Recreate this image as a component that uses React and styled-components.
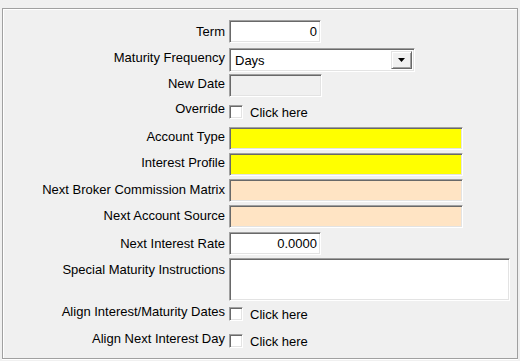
import React from "react";
import styled, { createGlobalStyle } from "styled-components";

const Global = createGlobalStyle`
  html, body { margin: 0; padding: 0; background: #f0f0f0; }
  body { font-family: "Liberation Sans", Arial, sans-serif; font-size: 13px; color: #000; }
  * { box-sizing: border-box; }
`;

const Page = styled.div`
  width: 520px;
  height: 361px;
  padding: 8px 2px 0 2px;
  background: #f0f0f0;
`;

const Group = styled.div`
  width: 516px;
  height: 351px;
  border: 1px solid #a0a0a0;
  box-shadow: inset 1px 1px 0 #fff, 0 1px 0 #fff;
  padding-top: 11px;
  display: grid;
  grid-template-columns: 222px 1fr;
  column-gap: 4px;
  align-content: start;
`;

const Label = styled.div`
  grid-column: 1;
  text-align: right;
  line-height: 15px;
  height: ${(p) => p.$h}px;
  margin-top: ${(p) => p.$mt || 0}px;
  padding-top: ${(p) => p.$lt}px;
  white-space: nowrap;
`;

const Cell = styled.div`
  grid-column: 2;
  height: ${(p) => p.$h}px;
  margin-top: ${(p) => p.$mt || 0}px;
  display: flex;
  align-items: ${(p) => (p.$center ? "center" : "flex-start")};
`;

const sunken = `
  border-top: 1px solid #a0a0a0;
  border-left: 1px solid #a0a0a0;
  border-right: 1px solid #ffffff;
  border-bottom: 1px solid #ffffff;
  box-shadow: inset 1px 1px 0 #696969, inset -1px -1px 0 #e3e3e3;
`;

const TextBox = styled.div`
  ${sunken}
  width: ${(p) => p.$w}px;
  height: ${(p) => p.$h || 23}px;
  background: ${(p) => p.$bg || "#fff"};
  line-height: 19px;
  padding: 1px 3px 0 3px;
  text-align: ${(p) => (p.$right ? "right" : "left")};
`;

const Select = styled.div`
  ${sunken}
  width: 186px;
  height: 24px;
  background: #fff;
  display: flex;
  align-items: stretch;
  padding: 2px;
`;

const SelectValue = styled.div`
  flex: 1;
  line-height: 20px;
  padding-left: 3px;
`;

const DropButton = styled.div`
  width: 21px;
  background: #f0f0f0;
  border-top: 1px solid #e3e3e3;
  border-left: 1px solid #e3e3e3;
  border-right: 1px solid #696969;
  border-bottom: 1px solid #696969;
  box-shadow: inset 1px 1px 0 #fff, inset -1px -1px 0 #a0a0a0;
  display: flex;
  align-items: center;
  justify-content: center;
`;

const Check = styled.div`
  ${sunken}
  width: 14px;
  height: 14px;
  background: #fff;
  flex: none;
`;

const CheckText = styled.span`
  margin-left: 7px;
  line-height: 15px;
`;

const rows = [
  { label: "Term", h: 23, mt: 0, lt: 4, kind: "text", w: 92, value: "0", right: true },
  { label: "Maturity Frequency", h: 24, mt: 5, lt: 2, kind: "select" },
  { label: "New Date", h: 23, mt: 2, lt: 2, kind: "text", w: 93, bg: "#f0f0f0" },
  { label: "Override", h: 24, mt: 3, lt: 1, kind: "check" },
  { label: "Account Type", h: 23, mt: 3, lt: 2, kind: "text", w: 234, bg: "#ffff00" },
  { label: "Interest Profile", h: 23, mt: 3, lt: 2, kind: "text", w: 234, bg: "#ffff00" },
  { label: "Next Broker Commission Matrix", h: 23, mt: 3, lt: 3, kind: "text", w: 234, bg: "#ffe4c4" },
  { label: "Next Account Source", h: 23, mt: 3, lt: 3, kind: "text", w: 234, bg: "#ffe4c4" },
  { label: "Next Interest Rate", h: 23, mt: 4, lt: 4, kind: "text", w: 92, value: "0.0000", right: true },
  { label: "Special Maturity Instructions", h: 43, mt: 3, lt: 4, kind: "text", w: 281 },
  { label: "Align Interest/Maturity Dates", h: 26, mt: 0, lt: 3, kind: "check" },
  { label: "Align Next Interest Day", h: 26, mt: 1, lt: 3, kind: "check" },
];

function Field({ r }) {
  if (r.kind === "select") {
    return (
      <Select>
        <SelectValue>Days</SelectValue>
        <DropButton>
          <svg width="8" height="4" viewBox="0 0 8 4">
            <path d="M0 0H7L3.5 4Z" fill="#000" />
          </svg>
        </DropButton>
      </Select>
    );
  }
  if (r.kind === "check") {
    return (
      <>
        <Check />
        <CheckText>Click here</CheckText>
      </>
    );
  }
  return (
    <TextBox $w={r.w} $h={r.h} $bg={r.bg} $right={r.right}>
      {r.value}
    </TextBox>
  );
}

export default function App() {
  return (
    <>
      <Global />
      <Page>
        <Group>
          {rows.map((r) => (
            <React.Fragment key={r.label}>
              <Label $h={r.h} $mt={r.mt} $lt={r.lt}>{r.label}</Label>
              <Cell $h={r.h} $mt={r.mt} $center={r.kind === "check"}>
                <Field r={r} />
              </Cell>
            </React.Fragment>
          ))}
        </Group>
      </Page>
    </>
  );
}
